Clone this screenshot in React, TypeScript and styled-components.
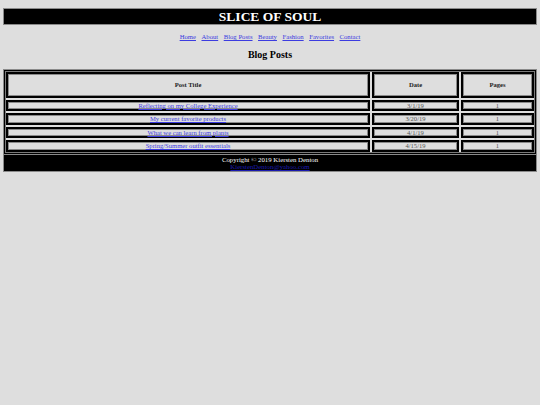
import React from "react";
import styled, { createGlobalStyle } from "styled-components";

const Global = createGlobalStyle`
  html, body { margin: 0; padding: 0; background: #dedede; }
  body { font-family: "Liberation Serif", "Times New Roman", serif; color: #000; }
`;

const Page = styled.div`
  padding: 8px 3px 0;
`;

const Header = styled.header`
  background: #000;
  border: 1px solid #8a8a8a;
  height: 15px;
  display: flex;
  align-items: center;
  justify-content: center;
`;

const Title = styled.h1`
  margin: 0;
  color: #fff;
  font-size: 13.5px;
  line-height: 15px;
  font-weight: bold;
`;

const Nav = styled.nav`
  margin-top: 7px;
  display: flex;
  justify-content: center;
  gap: 5.5px;
  font-size: 6.7px;
  line-height: 9px;
`;

const Link = styled.a`
  color: #3c3ce0;
  text-decoration: underline;
`;

const Heading = styled.h2`
  margin: 5px 0 0;
  text-align: center;
  font-size: 10px;
  line-height: 18px;
  font-weight: bold;
`;

const Table = styled.table`
  margin-top: 5px;
  width: 100%;
  table-layout: fixed;
  border-collapse: separate;
  border-spacing: 2px;
  border: 1px solid #8a8a8a;
  box-shadow: inset 0 0 0 1px #000, inset 0 0 0 2px #7a7a7a;
`;

const HeadCell = styled.th<{ $w: number }>`
  width: ${(p) => p.$w}px;
  box-sizing: border-box;
  height: 25.7px;
  padding: 0;
  border: 2px solid #000;
  box-shadow: inset 0 0 0 1px #8a8a8a;
  font-size: 6.6px;
  line-height: 8px;
  font-weight: bold;
  color: #222;
  text-align: center;
  vertical-align: middle;
`;

const Cell = styled.td`
  padding: 0;
  border: 2px solid #000;
  box-shadow: inset 0 0 0 1px #8a8a8a;
  font-size: 6.6px;
  line-height: 7.5px;
  height: 7.5px;
  color: #555;
  text-align: center;
  vertical-align: middle;
  white-space: nowrap;
`;

const Footer = styled.footer`
  background: #000;
  border: 1px solid #8a8a8a;
  border-top: none;
  padding: 1px 0 0;
  text-align: center;
  font-size: 6.8px;
  line-height: 7.5px;
  color: #fff;
`;

const MailLink = styled.a`
  display: block;
  color: #1a1ab0;
  text-decoration: underline;
`;

const navItems = ["Home", "About", "Blog Posts", "Beauty", "Fashion", "Favorites", "Contact"];

const posts = [
  { title: "Reflecting on my College Experience", date: "3/1/19", pages: "1" },
  { title: "My current favorite products", date: "3/20/19", pages: "1" },
  { title: "What we can learn from plants", date: "4/1/19", pages: "1" },
  { title: "Spring/Summer outfit essentials", date: "4/15/19", pages: "1" },
];

export default function App() {
  return (
    <>
      <Global />
      <Page>
        <Header>
          <Title>SLICE OF SOUL</Title>
        </Header>
        <Nav>
          {navItems.map((n) => (
            <Link key={n} href="#">
              {n}
            </Link>
          ))}
        </Nav>
        <Heading>Blog Posts</Heading>
        <Table>
          <thead>
            <tr>
              <HeadCell $w={364}>Post Title</HeadCell>
              <HeadCell $w={87}>Date</HeadCell>
              <HeadCell $w={73}>Pages</HeadCell>
            </tr>
          </thead>
          <tbody>
            {posts.map((p) => (
              <tr key={p.title}>
                <Cell>
                  <Link href="#">{p.title}</Link>
                </Cell>
                <Cell>{p.date}</Cell>
                <Cell>{p.pages}</Cell>
              </tr>
            ))}
          </tbody>
        </Table>
        <Footer>
          Copyright © 2019 Kiersten Denton
          <MailLink href="#">KierstenDenton@yahoo.com</MailLink>
        </Footer>
      </Page>
    </>
  );
}
